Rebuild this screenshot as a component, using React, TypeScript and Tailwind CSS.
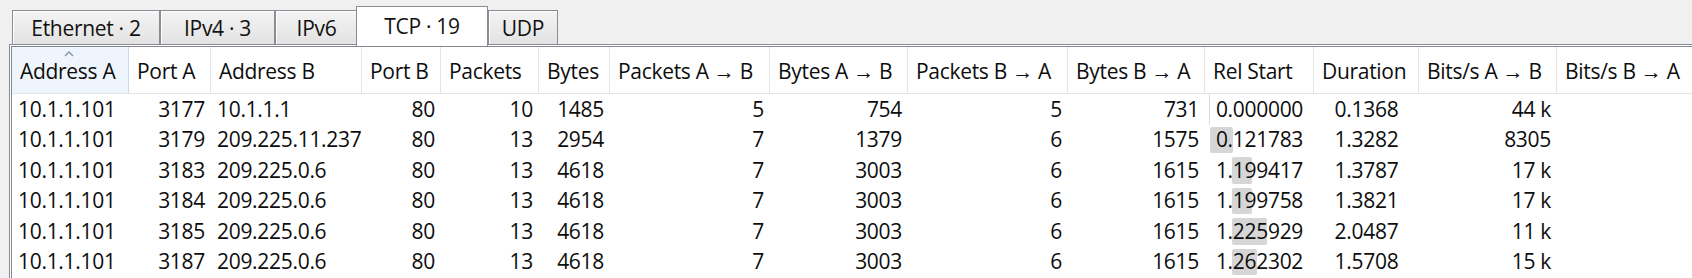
import React from "react";

type Col = { h: string; w: string; align: "left" | "right" | "center" };

const cols: Col[] = [
  { h: "Address A", w: "w-[117px]", align: "left" },
  { h: "Port A", w: "w-[82px]", align: "right" },
  { h: "Address B", w: "w-[151px]", align: "left" },
  { h: "Port B", w: "w-[79px]", align: "right" },
  { h: "Packets", w: "w-[98px]", align: "right" },
  { h: "Bytes", w: "w-[71px]", align: "right" },
  { h: "Packets A \u2192 B", w: "w-[160px]", align: "right" },
  { h: "Bytes A \u2192 B", w: "w-[138px]", align: "right" },
  { h: "Packets B \u2192 A", w: "w-[160px]", align: "right" },
  { h: "Bytes B \u2192 A", w: "w-[137px]", align: "right" },
  { h: "Rel Start", w: "w-[109px]", align: "center" },
  { h: "Duration", w: "w-[105px]", align: "center" },
  { h: "Bits/s A \u2192 B", w: "w-[138px]", align: "right" },
  { h: "Bits/s B \u2192 A", w: "w-[160px]", align: "right" },
];

type Row = { cells: string[]; bar: { left: number; width: number } };

const rows: Row[] = [
  { cells: ["10.1.1.101", "3177", "10.1.1.1", "80", "10", "1485", "5", "754", "5", "731", "0.000000", "0.1368", "44 k", ""], bar: { left: 4, width: 1 } },
  { cells: ["10.1.1.101", "3179", "209.225.11.237", "80", "13", "2954", "7", "1379", "6", "1575", "0.121783", "1.3282", "8305", ""], bar: { left: 5, width: 23 } },
  { cells: ["10.1.1.101", "3183", "209.225.0.6", "80", "13", "4618", "7", "3003", "6", "1615", "1.199417", "1.3787", "17 k", ""], bar: { left: 27, width: 20 } },
  { cells: ["10.1.1.101", "3184", "209.225.0.6", "80", "13", "4618", "7", "3003", "6", "1615", "1.199758", "1.3821", "17 k", ""], bar: { left: 27, width: 20 } },
  { cells: ["10.1.1.101", "3185", "209.225.0.6", "80", "13", "4618", "7", "3003", "6", "1615", "1.225929", "2.0487", "11 k", ""], bar: { left: 27, width: 35 } },
  { cells: ["10.1.1.101", "3187", "209.225.0.6", "80", "13", "4618", "7", "3003", "6", "1615", "1.262302", "1.5708", "15 k", ""], bar: { left: 27, width: 25 } },
];

function Tab({ label, w, active }: { label: string; w: string; active?: boolean }) {
  if (active) {
    return (
      <div
        className={`${w} relative z-10 -ml-[2px] mb-[-2px] flex h-[40px] items-start justify-center whitespace-nowrap border border-b-0 border-[#898c95] bg-white pt-[4px] text-[21px] tracking-[-0.3px] text-[#111]`}
      >
        {label}
      </div>
    );
  }
  return (
    <div
      className={`${w} flex h-[34px] items-start justify-center whitespace-nowrap border border-b-0 border-[#898c95] bg-gradient-to-b from-[#f4f4f4] to-[#e2e2e2] pt-[2px] text-[21px] tracking-[-0.3px] text-[#111] shadow-[inset_1px_1px_0_#ffffff]`}
    >
      {label}
    </div>
  );
}

export default function App() {
  return (
    <div
      className="relative h-[278px] w-[1692px] overflow-hidden bg-[#f0f0f0] text-[#0d0d0d]"
      style={{ fontFamily: '"Open Sans", "Noto Sans", sans-serif' }}
    >
      <div className="relative z-10 flex h-[44px] items-end pl-[12px]">
        <Tab label={"Ethernet \u00b7 2"} w="w-[148px]" />
        <Tab label={"IPv4 \u00b7 3"} w="w-[115px]" />
        <Tab label="IPv6" w="w-[83px]" />
        <Tab label={"TCP \u00b7 19"} w="w-[132px]" active />
        <Tab label="UDP" w="w-[70px]" />
      </div>
      <div className="ml-[9px] h-[240px] border-l border-t border-[#898c95] bg-white pl-px pt-px">
        <div className="h-full border-l border-t border-[#828790] bg-white">
          {/* header */}
          <div className="flex h-[47px] border-b border-[#e5e5e5]">
            {cols.map((c, i) => (
              <div
                key={c.h}
                className={`${c.w} relative flex shrink-0 items-center whitespace-nowrap border-r pl-[8px] pt-[3px] text-[21px] tracking-[-0.3px] ${
                  i === 0 ? "border-[#c9dcee] bg-[#eef5fc]" : "border-[#e5e5e5] bg-white"
                }`}
              >
                {i === 0 && (
                  <svg
                    className="absolute left-[52px] top-[4px]"
                    width="10"
                    height="6"
                    viewBox="0 0 10 6"
                  >
                    <path d="M1 5 L5 1 L9 5" fill="none" stroke="#8c9aab" strokeWidth="1.6" />
                  </svg>
                )}
                {c.h}
              </div>
            ))}
          </div>
          {/* rows */}
          {rows.map((r, ri) => (
            <div key={ri} className="flex h-[30.5px]">
              {r.cells.map((v, ci) => {
                const c = cols[ci];
                const al =
                  c.align === "left"
                    ? "justify-start pl-[6px]"
                    : c.align === "right"
                    ? "justify-end pr-[6px]"
                    : "justify-center";
                return (
                  <div
                    key={ci}
                    className={`${c.w} ${al} relative flex shrink-0 items-center whitespace-nowrap text-[21px] tracking-[-0.3px]`}
                  >
                    {ci === 10 && (
                      <div
                        className={
                          r.bar.width <= 1
                            ? "absolute bottom-0 top-0 bg-[#dcdcdc]"
                            : "absolute bottom-[2px] top-[2px] rounded-[2px] bg-[#d6d6d6]"
                        }
                        style={{ left: r.bar.left, width: r.bar.width }}
                      />
                    )}
                    <span className="relative">{v}</span>
                  </div>
                );
              })}
            </div>
          ))}
        </div>
      </div>
    </div>
  );
}
